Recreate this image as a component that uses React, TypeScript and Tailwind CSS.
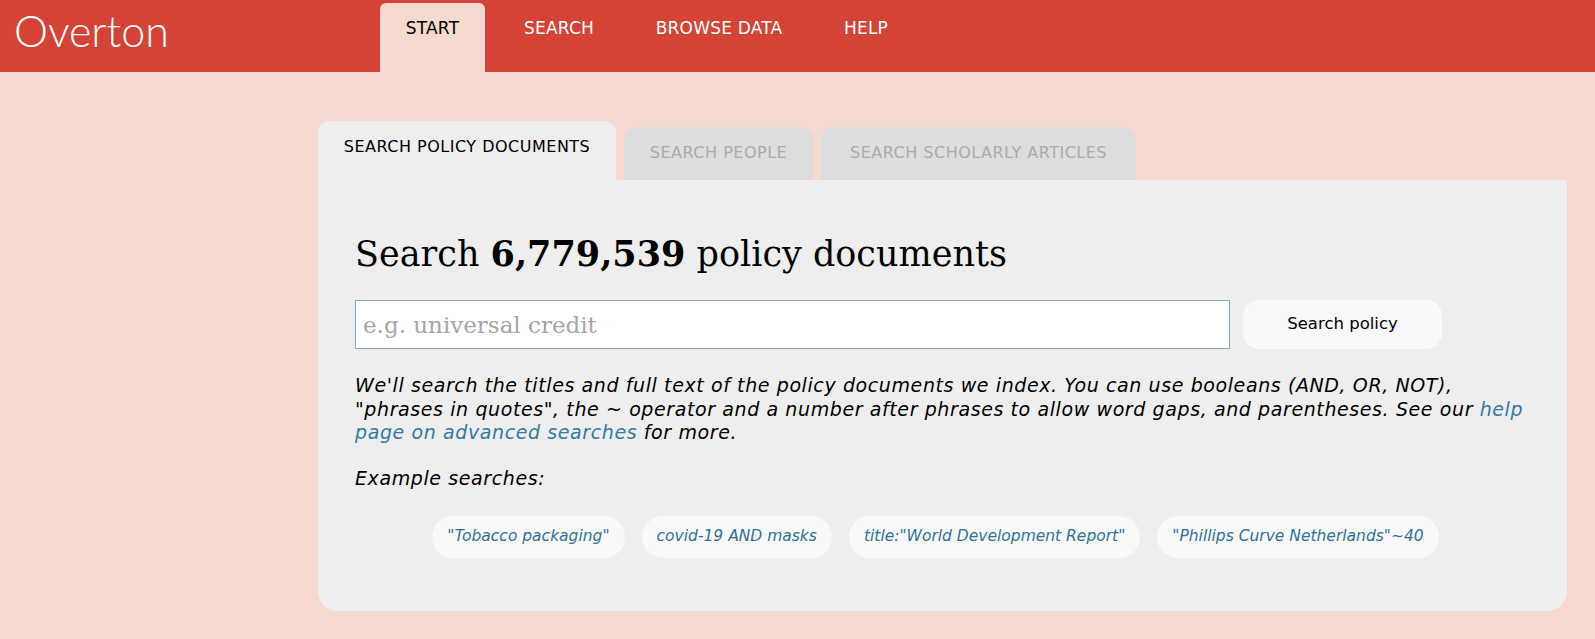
import React from "react";

const sans = "font-['DejaVu_Sans','Noto_Sans',sans-serif]";
const serif = "font-['DejaVu_Serif',serif]";

export default function App() {
  const nav = [
    { t: "START", c: "w-[105px] rounded-t-[6px] bg-[#f6dad1] text-black" },
    { t: "SEARCH", c: "ml-[19px] w-[110px] text-white" },
    { t: "BROWSE DATA", c: "ml-[30px] w-[150px] text-white" },
    { t: "HELP", c: "ml-[37px] w-[70px] text-white" },
  ];
  const examples = [
    '"Tobacco packaging"',
    "covid-19 AND masks",
    'title:"World Development Report"',
    '"Phillips Curve Netherlands"~40',
  ];
  return (
    <div className={`min-h-[639px] bg-[#f6dad1] ${sans}`}>
      <header className="flex h-[72px] bg-[#d44336]">
        <div className="w-[380px] pl-[14px] pt-[4px]">
          <span className="font-['Lato',sans-serif] text-[43px] font-light leading-[54px] text-white">
            Overton
          </span>
        </div>
        <nav className="flex pt-[3px]">
          {nav.map((n) => (
            <div
              key={n.t}
              className={`pt-[14px] text-center text-[17px] leading-[23px] tracking-[0.2px] ${n.c}`}
            >
              {n.t}
            </div>
          ))}
        </nav>
      </header>

      <main className="pl-[318px] pr-[28px] pt-[49px] pb-[28px]">
        <div className="flex items-end gap-[8px]">
          <div className="h-[59px] w-[298px] rounded-t-[12px] bg-[#eeeeee] pt-[15px] text-center text-[16px] leading-[22px] tracking-[0.5px] text-black">
            SEARCH POLICY DOCUMENTS
          </div>
          <div className="h-[53px] w-[189px] rounded-t-[12px] bg-[#dddddd] pt-[15px] text-center text-[16px] leading-[22px] tracking-[0.5px] text-[#aaaaaa]">
            SEARCH PEOPLE
          </div>
          <div className="h-[53px] w-[315px] rounded-t-[12px] bg-[#dddddd] pt-[15px] text-center text-[16px] leading-[22px] tracking-[0.5px] text-[#aaaaaa]">
            SEARCH SCHOLARLY ARTICLES
          </div>
        </div>

        <div className="rounded-b-[20px] bg-[#eeeeee] pl-[37px] pr-[37px] pt-[51px] pb-[53px]">
          <h1 className={`${serif} text-[35px] leading-[46px] text-black`}>
            Search <span className="font-bold">6,779,539</span> policy documents
          </h1>

          <div className="mt-[23px] flex gap-[13px]">
            <input
              placeholder="e.g. universal credit"
              className={`${serif} h-[49px] w-[875px] border border-[#7fa8d6] bg-white px-[7px] text-[23px] text-black outline-none placeholder:text-[#a6a6a6]`}
            />
            <button className="h-[49px] w-[199px] rounded-[16px] bg-[#f9f9f9] text-[16.5px] text-black">
              Search policy
            </button>
          </div>

          <p className="-mr-[30px] mt-[25px] text-[19px] italic leading-[23.5px] tracking-[0.6px] text-black">
            We'll search the titles and full text of the policy documents we
            index. You can use booleans (AND, OR, NOT),
            <br />
            "phrases in quotes", the ~ operator and a number after phrases to
            allow word gaps, and parentheses. See our{" "}
            <a className="text-[#3479a3]">help</a>
            <br />
            <a className="text-[#3479a3]">page on advanced searches</a> for
            more.
          </p>

          <p className="mt-[22px] text-[19px] italic leading-[23.5px] tracking-[0.6px] text-black">
            Example searches:
          </p>

          <div className="mt-[26px] flex justify-center gap-[17px] pr-[14px]">
            {examples.map((e) => (
              <span
                key={e}
                className="flex h-[42px] items-center rounded-full bg-[#f9f9f9] px-[15px] text-[15.5px] italic text-[#2f7199]"
              >
                {e}
              </span>
            ))}
          </div>
        </div>
      </main>
    </div>
  );
}
